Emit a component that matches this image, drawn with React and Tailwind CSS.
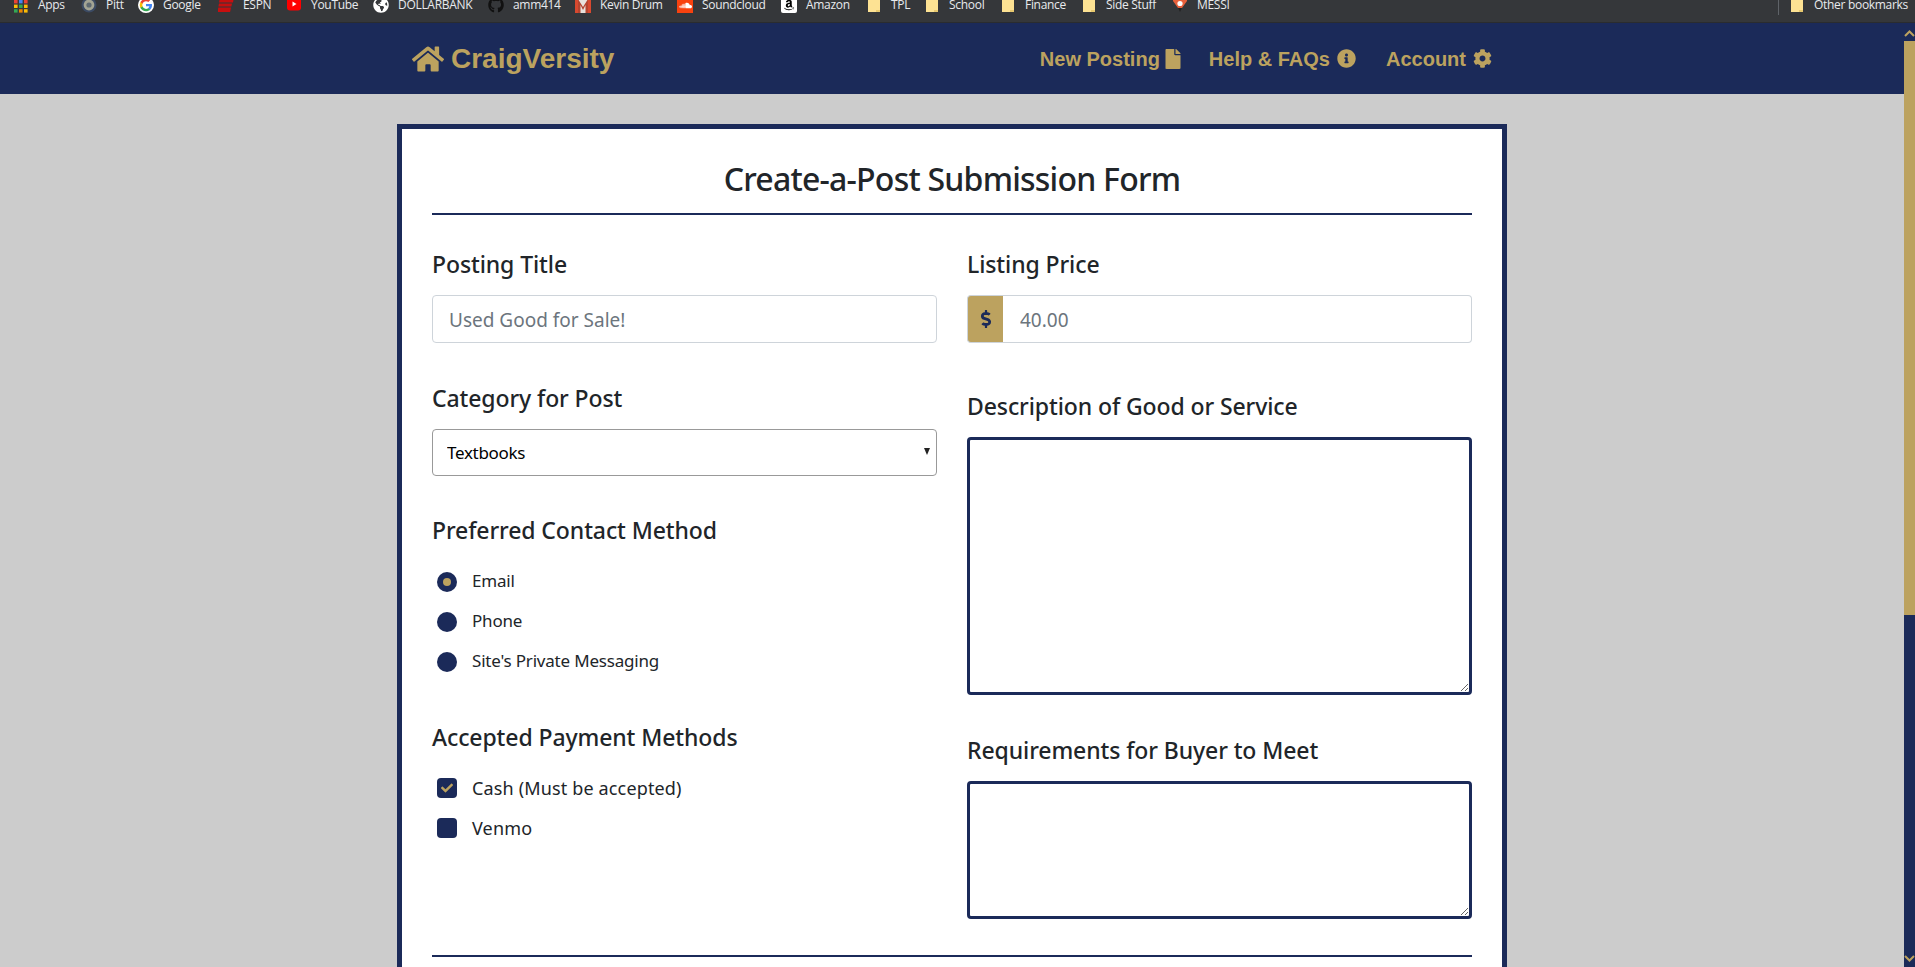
import React from "react";
import { FaHome, FaFile, FaInfoCircle, FaCog, FaDollarSign, FaCheck, FaGithub, FaSoundcloud, FaGlobeAmericas, FaAmazon } from "react-icons/fa";

const Folder = () => (
  <svg viewBox="0 0 16 16" className="w-4 h-4 shrink-0">
    <path d="M2 0h12v15H2z" fill="#fde293" />
    <path d="M10 13h4v2h-4z" fill="#e8c96f" />
  </svg>
);

const Apps = () => {
  const c = ["#ea4335", "#4285f4", "#ea4335", "#fbbc05", "#34a853", "#fbbc05", "#34a853", "#ea8600", "#fbbc05"];
  return (
    <svg viewBox="0 0 16 16" className="w-4 h-4 shrink-0">
      {c.map((f, i) => (
        <rect key={i} x={1 + (i % 3) * 5} y={3 + Math.floor(i / 3) * 4.6} width="3.6" height="3.4" fill={f} />
      ))}
    </svg>
  );
};

const Pitt = () => (
  <svg viewBox="0 0 16 16" className="w-4 h-4 shrink-0">
    <circle cx="8" cy="8" r="7.5" fill="#3b4a63" />
    <circle cx="8" cy="8" r="5.400" fill="#a3a493" />
    <circle cx="8" cy="8" r="2.600" fill="#5e6a72" />
  </svg>
);

const Google = () => (
  <svg viewBox="0 0 48 48" className="w-4 h-4 shrink-0">
    <circle cx="24" cy="24" r="24" fill="#fff" />
    <path d="M42 24.5c0-1.300-.1-2.500-.3-3.700H24v7h10.100c-.4 2.300-1.800 4.300-3.700 5.600v4.600h6c3.500-3.200 5.600-8 5.600-13.500z" fill="#4285f4" />
    <path d="M24 43c5 0 9.300-1.700 12.400-4.500l-6-4.600c-1.700 1.100-3.900 1.800-6.400 1.800-4.900 0-9-3.300-10.500-7.700H7.300v4.800C10.400 38.100 16.700 43 24 43z" fill="#34a853" />
    <path d="M13.500 28c-.8-2.300-.8-5.700 0-8v-4.800H7.300a19 19 0 0 0 0 17.600z" fill="#fbbc05" />
    <path d="M24 12.500c2.800 0 5.200 1 7.100 2.800l5.300-5.300C33.200 7 29 5 24 5 16.700 5 10.400 9.900 7.300 15.200l6.200 4.800c1.500-4.400 5.600-7.500 10.500-7.500z" fill="#ea4335" />
  </svg>
);

const Espn = () => (
  <svg viewBox="0 0 16 16" className="w-4 h-4 shrink-0">
    <path d="M2 0h14l-1 5.500H1z M1 6.500h13l-.6 3H.4z M.3 10.500h12.700l-.9 4.500H-.5z" fill="#c70f0f" />
  </svg>
);

const Youtube = () => (
  <svg viewBox="0 0 16 16" className="w-4 h-4 shrink-0">
    <rect x="1" y="0" width="14" height="13.500" rx="3" fill="#f00" />
    <path d="M6.500 4.500v5l4-2.500z" fill="#fff" />
  </svg>
);

const Kevin = () => (
  <svg viewBox="0 0 16 16" className="w-4 h-4 shrink-0">
    <rect x="0" y="0" width="16" height="16" fill="#e8e2dc" />
    <rect x="0" y="0" width="3" height="16" fill="#d8492f" />
    <rect x="13" y="0" width="3" height="16" fill="#d8492f" />
    <path d="M3 16V2l5 8 5-8v14h-2.500V8L8 13 5.500 8v8z" fill="#b5442f" />
  </svg>
);

const Messi = () => (
  <svg viewBox="0 0 16 16" className="w-4 h-4 shrink-0">
    <path d="M1 0h14v4l-5 7H6L1 4z" fill="#e8613c" />
    <circle cx="8" cy="6.500" r="2.600" fill="#fff" />
    <path d="M6.200 11h3.600L8 15z" fill="#222" />
  </svg>
);

const Sound = () => (
  <span className="w-4 h-4 shrink-0 bg-[#f8420f] flex items-center justify-center text-white text-[13px]">
    <FaSoundcloud />
  </span>
);

const Amzn = () => (
  <span className="w-4 h-4 shrink-0 bg-white rounded-[2px] flex items-center justify-center text-black text-[12px]">
    <FaAmazon />
  </span>
);

const bookmarks = [
  { icon: <Apps />, label: "Apps", w: "w-[27px]" },
  { icon: <Pitt />, label: "Pitt", w: "w-[16px]" },
  { icon: <Google />, label: "Google", w: "w-[39px]" },
  { icon: <Espn />, label: "ESPN", w: "w-[27px]" },
  { icon: <Youtube />, label: "YouTube", w: "w-[46px]" },
  { icon: <FaGlobeAmericas className="w-4 h-4 shrink-0 text-white" />, label: "DOLLARBANK", w: "w-[74px]" },
  { icon: <FaGithub className="w-4 h-4 shrink-0 text-[#111]" />, label: "amm414", w: "w-[46px]" },
  { icon: <Kevin />, label: "Kevin Drum", w: "w-[61px]" },
  { icon: <Sound />, label: "Soundcloud", w: "w-[63px]" },
  { icon: <Amzn />, label: "Amazon", w: "w-[44px]" },
  { icon: <Folder />, label: "TPL", w: "w-[17px]" },
  { icon: <Folder />, label: "School", w: "w-[35px]" },
  { icon: <Folder />, label: "Finance", w: "w-[40px]" },
  { icon: <Folder />, label: "Side Stuff", w: "w-[50px]" },
  { icon: <Messi />, label: "MESSI", w: "w-[33px]" },
];

const BookmarkBar = () => (
  <div className="h-[23px] shrink-0 bg-[#35373a] overflow-hidden border-b border-[#2a2c2f] flex justify-between pl-[13px] pr-[10px] font-['Open_Sans',sans-serif] text-[12px] leading-[10px] tracking-[-0.3px] text-[#e8eaed]">
    <div className="flex gap-[16px] h-[10px] items-center">
      {bookmarks.map((b) => (
        <div key={b.label} className="flex items-center gap-[9px]">
          {b.icon}
          <span className={`${b.w} whitespace-nowrap`}>{b.label}</span>
        </div>
      ))}
    </div>
    <div className="flex h-[10px] items-center">
      <div className="w-px h-[20px] bg-[#5f6368] mr-[10px]" />
      <div className="flex items-center gap-[9px]">
        <Folder />
        <span className="w-[91px] whitespace-nowrap">Other bookmarks</span>
      </div>
    </div>
  </div>
);

const NavLink = ({ children, icon }) => (
  <a className="flex items-center gap-[7px] text-[20px] font-bold text-[#bca25f]">
    {children}
    {icon}
  </a>
);

const Nav = () => (
  <nav className="h-[71px] bg-[#1b2a59] font-['Liberation_Sans',sans-serif]">
    <div className="w-[1140px] mx-auto px-[30px] h-full flex items-center justify-between text-[#bca25f]">
      <a className="flex items-center gap-[7px] text-[28px] font-bold">
        <FaHome className="text-[32px]" />
        CraigVersity
      </a>
      <div className="flex items-center gap-[30px]">
        <NavLink icon={<FaFile className="text-[20px] -ml-[4px] -mr-[4px]" />}>New Posting</NavLink>
        <NavLink icon={<FaInfoCircle className="text-[19px]" />}>Help &amp; FAQs</NavLink>
        <NavLink icon={<FaCog className="text-[19px]" />}>Account</NavLink>
      </div>
    </div>
  </nav>
);

const Label = ({ children, className = "" }) => (
  <label className={`block pb-px text-[23px] leading-[30px] font-medium text-[#212529] tracking-[-0.1px] ${className}`}>{children}</label>
);

const Radio = ({ checked, children }) => (
  <label className="h-[40px] flex items-center">
    <span className="ml-[5px] w-5 h-5 rounded-full bg-[#1b2a59] flex items-center justify-center">
      {checked && <span className="w-2 h-2 rounded-full bg-[#bca25f]" />}
    </span>
    <span className="ml-[15px] -mt-[2px] text-[17px] tracking-[-0.2px] text-[#212529]">{children}</span>
  </label>
);

const Check = ({ checked, children }) => (
  <label className="h-[40px] flex items-center">
    <span className="ml-[5px] w-5 h-5 rounded-[4px] bg-[#1b2a59] flex items-center justify-center">
      {checked && <FaCheck className="text-[#bca25f] text-[12px]" />}
    </span>
    <span className="ml-[15px] text-[18px] tracking-[0.15px] text-[#212529]">{children}</span>
  </label>
);

const Form = () => (
  <div className="w-[1140px] mx-auto px-[15px] pt-[30px]">
    <div className="bg-white border-[5px] border-[#1b2a59] px-[30px] pt-[28px] pb-[30px] text-[#212529]">
      <h2 className="text-[32px] leading-[44px] font-medium text-center tracking-[-0.77px]">Create-a-Post Submission Form</h2>
      <hr className="mt-[12px] border-0 h-[2px] bg-[#1b2a59]" />
      <div className="grid grid-cols-2 gap-x-[30px] mt-[34px]">
        <div>
          <Label>Posting Title</Label>
          <input
            placeholder="Used Good for Sale!"
            className="mt-[15px] w-full h-[48px] px-4 pt-[2px] border border-[#ced4da] rounded-[4px] text-[19px] placeholder:text-[#6c757d] outline-none"
          />
          <Label className="mt-[40px]">Category for Post</Label>
          <div className="relative mt-[15px]">
            <select className="appearance-none w-full h-[47px] pl-[14px] bg-white border border-[#999] rounded-[4px] text-[17px] tracking-[-0.3px] text-black outline-none">
              <option>Textbooks</option>
            </select>
            <svg viewBox="0 0 6 7" className="absolute right-[7px] top-[19px] w-[6px] h-[7px]">
              <path d="M0 0h6L3 7z" fill="#222" />
            </svg>
          </div>
          <Label className="mt-[39px]">Preferred Contact Method</Label>
          <div className="mt-[16px]">
            <Radio checked>Email</Radio>
            <Radio>Phone</Radio>
            <Radio>Site's Private Messaging</Radio>
          </div>
          <Label className="mt-[40px]">Accepted Payment Methods</Label>
          <div className="mt-[15px]">
            <Check checked>Cash (Must be accepted)</Check>
            <Check>Venmo</Check>
          </div>
        </div>
        <div>
          <Label>Listing Price</Label>
          <div className="mt-[15px] flex h-[48px]">
            <span className="w-[36px] flex items-center justify-center bg-[#bca25f] border border-[#ced4da] border-r-0 rounded-l-[4px] text-[#1b2a59] text-[18px]">
              <FaDollarSign />
            </span>
            <input
              placeholder="40.00"
              className="flex-1 min-w-0 pl-[17px] pr-4 pt-[2px] border border-l-0 border-[#ced4da] rounded-r-[4px] text-[19px] placeholder:text-[#6c757d] outline-none"
            />
          </div>
          <Label className="mt-[48px]">Description of Good or Service</Label>
          <textarea className="block mt-[15px] w-full h-[258px] border-[3px] border-[#1b2a59] rounded-[4px] outline-none" />
          <Label className="mt-[40px]">Requirements for Buyer to Meet</Label>
          <textarea className="block mt-[15px] w-full h-[138px] border-[3px] border-[#1b2a59] rounded-[4px] outline-none" />
        </div>
      </div>
      <hr className="mt-[36px] border-0 h-[2px] bg-[#1b2a59]" />
    </div>
  </div>
);

const Scrollbar = () => (
  <div className="w-[11px] shrink-0 bg-[#1b2a59] flex flex-col items-center">
    <svg viewBox="0 0 11 18" className="w-[11px] h-[18px] shrink-0">
      <path d="M1 13l4.500-4.500L10 13" fill="none" stroke="#bca25f" strokeWidth="2" />
    </svg>
    <div className="w-full h-[574px] bg-[#bca25f]" />
    <div className="flex-1" />
    <svg viewBox="0 0 11 14" className="w-[11px] h-[14px] shrink-0">
      <path d="M1 3l4.500 4.500L10 3" fill="none" stroke="#bca25f" strokeWidth="2" />
    </svg>
  </div>
);

export default function App() {
  return (
    <div className="h-screen overflow-hidden flex flex-col font-['Noto_Sans',sans-serif] bg-[#cccccc]">
      <BookmarkBar />
      <div className="flex flex-1 min-h-0">
        <main className="flex-1 min-w-0 overflow-hidden">
          <Nav />
          <Form />
        </main>
        <Scrollbar />
      </div>
    </div>
  );
}
